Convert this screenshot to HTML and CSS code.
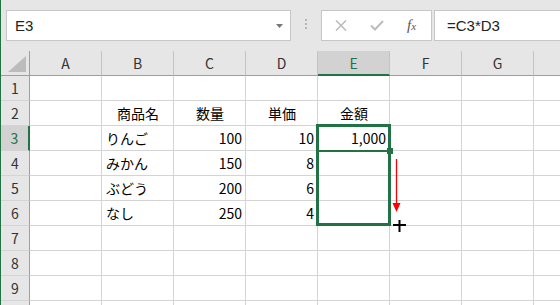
FILE: index.html
```html
<!DOCTYPE html>
<html lang="ja">
<head>
    <meta charset="UTF-8">
    <title>Excel</title>
    <link rel="stylesheet" href="styles.css">
</head>
<body>
    <div class="app">
        <div class="toolbar">
            <div class="name-box">
                <span>E3</span>
                <svg class="drop" width="7" height="4" viewBox="0 0 7 4"><path d="M0 0H7L3.5 4Z" fill="#777"/></svg>
            </div>
            <div class="grip"><i></i><i></i><i></i></div>
            <div class="fx-buttons">
                <svg width="12" height="11" viewBox="0 0 12 11"><path d="M1 0.5L11 10.5M11 0.5L1 10.5" stroke="#bdbdbd" stroke-width="1.6" fill="none"/></svg>
                <svg width="14" height="11" viewBox="0 0 14 11"><path d="M1 5.5L5 9.5L13 1" stroke="#bdbdbd" stroke-width="2" fill="none"/></svg>
                <span class="fx">f<small>x</small></span>
            </div>
            <div class="formula">=C3*D3</div>
        </div>

        <div class="sheet">
            <div class="row head">
                <div class="hd corner">
                    <svg width="18" height="16" viewBox="0 0 18 16"><path d="M18 0V16H0Z" fill="#bcbcbc"/></svg>
                </div>
                <div class="col">A</div>
                <div class="col">B</div>
                <div class="col">C</div>
                <div class="col">D</div>
                <div class="col on">E</div>
                <div class="col">F</div>
                <div class="col">G</div>
                <div class="col last"></div>
            </div>
            <div class="row">
                <div class="hd">1</div>
                <div class="c"></div><div class="c"></div><div class="c"></div><div class="c"></div><div class="c"></div><div class="c"></div><div class="c"></div><div class="c last"></div>
            </div>
            <div class="row">
                <div class="hd">2</div>
                <div class="c"></div>
                <div class="c ctr">商品名</div>
                <div class="c ctr">数量</div>
                <div class="c ctr">単価</div>
                <div class="c ctr">金額</div>
                <div class="c"></div><div class="c"></div><div class="c last"></div>
            </div>
            <div class="row">
                <div class="hd on">3</div>
                <div class="c"></div>
                <div class="c">りんご</div>
                <div class="c num">100</div>
                <div class="c num">10</div>
                <div class="c num">1,000</div>
                <div class="c"></div><div class="c"></div><div class="c last"></div>
            </div>
            <div class="row">
                <div class="hd">4</div>
                <div class="c"></div>
                <div class="c">みかん</div>
                <div class="c num">150</div>
                <div class="c num">8</div>
                <div class="c"></div><div class="c"></div><div class="c"></div><div class="c last"></div>
            </div>
            <div class="row">
                <div class="hd">5</div>
                <div class="c"></div>
                <div class="c">ぶどう</div>
                <div class="c num">200</div>
                <div class="c num">6</div>
                <div class="c"></div><div class="c"></div><div class="c"></div><div class="c last"></div>
            </div>
            <div class="row">
                <div class="hd">6</div>
                <div class="c"></div>
                <div class="c">なし</div>
                <div class="c num">250</div>
                <div class="c num">4</div>
                <div class="c"></div><div class="c"></div><div class="c"></div><div class="c last"></div>
            </div>
            <div class="row">
                <div class="hd">7</div>
                <div class="c"></div><div class="c"></div><div class="c"></div><div class="c"></div><div class="c"></div><div class="c"></div><div class="c"></div><div class="c last"></div>
            </div>
            <div class="row">
                <div class="hd">8</div>
                <div class="c"></div><div class="c"></div><div class="c"></div><div class="c"></div><div class="c"></div><div class="c"></div><div class="c"></div><div class="c last"></div>
            </div>
            <div class="row">
                <div class="hd">9</div>
                <div class="c"></div><div class="c"></div><div class="c"></div><div class="c"></div><div class="c"></div><div class="c"></div><div class="c"></div><div class="c last"></div>
            </div>
            <div class="row">
                <div class="hd"></div>
                <div class="c"></div><div class="c"></div><div class="c"></div><div class="c"></div><div class="c"></div><div class="c"></div><div class="c"></div><div class="c last"></div>
            </div>

            <!-- selection E3:E6 and fill drag -->
            <div class="selection"><div class="active-line"></div></div>
            <div class="fill-handle"></div>
            <svg class="drag-arrow" width="9" height="54" viewBox="0 0 9 54">
                <path d="M4.5 0V46" stroke="#f00" stroke-width="1.3"/>
                <path d="M0.5 44H8.5L4.5 53Z" fill="#f00"/>
            </svg>
            <svg class="cross" width="13" height="12" viewBox="0 0 13 12">
                <path d="M0 5H13M6.5 0V12" stroke="#000" stroke-width="2"/>
            </svg>
        </div>
    </div>
</body>
</html>
```

FILE: styles.css
```css
body {
    margin: 0;
    font-family: "Noto Sans CJK JP", "Liberation Sans", sans-serif;
    color: #000;
    overflow: hidden;
}

.app {
    border-left: 1px solid #217346;
    height: 305px;
    overflow: hidden;
}

.toolbar {
    display: flex;
    align-items: flex-start;
    height: 51px;
    padding-top: 10px;
    box-sizing: border-box;
    background-color: #e6e6e6;
}

.toolbar > * {
    flex: none;
}

.name-box {
    display: flex;
    align-items: center;
    justify-content: space-between;
    width: 285px;
    height: 31px;
    margin-left: 5px;
    padding: 0 7px 0 8px;
    box-sizing: border-box;
    background-color: #fff;
    border: 1px solid #c6c6c6;
    font-family: "Liberation Sans", sans-serif;
    font-size: 15px;
    color: #222;
}

.grip {
    display: flex;
    flex-direction: column;
    gap: 2px;
    width: 2px;
    margin: 9px 14px 0 14px;
}

.grip i {
    width: 2px;
    height: 2px;
    background-color: #b4b4b4;
}

.fx-buttons {
    display: flex;
    align-items: center;
    gap: 23px;
    width: 111px;
    height: 31px;
    padding-left: 13px;
    box-sizing: border-box;
    background-color: #fff;
    border: 1px solid #c6c6c6;
}

.fx {
    font-family: "Liberation Serif", serif;
    font-style: italic;
    font-size: 15px;
    color: #555;
}

.fx small {
    font-size: 11px;
}

.formula {
    width: 300px;
    height: 31px;
    margin-left: 2px;
    padding-left: 12px;
    box-sizing: border-box;
    background-color: #fff;
    border: 1px solid #c6c6c6;
    font-family: "Liberation Sans", sans-serif;
    font-size: 15px;
    line-height: 29px;
    color: #222;
}

.sheet {
    position: relative;
}

.row {
    display: flex;
    height: 25px;
}

.row > div {
    flex: none;
    box-sizing: border-box;
    height: 25px;
    border-right: 1px solid #d4d4d4;
    border-bottom: 1px solid #d4d4d4;
}

.hd {
    width: 29px;
    display: flex;
    align-items: center;
    justify-content: center;
    background-color: #e6e6e6;
    font-size: 14px;
    color: #333;
    border-right-color: #9e9e9e !important;
}

.hd.on {
    background-color: #d2d2d2;
    color: #217346;
    border-right: 2px solid #217346 !important;
}

.corner {
    align-items: flex-end;
    justify-content: flex-end;
    padding: 0 3px 3px 0;
}

.head > div {
    border-bottom-color: #9e9e9e !important;
}

.col {
    width: 72px;
    display: flex;
    align-items: center;
    justify-content: center;
    background-color: #e6e6e6;
    font-size: 14px;
    color: #333;
    border-right-color: #c4c4c4 !important;
}

.col.on {
    background-color: #d2d2d2;
    color: #217346;
    border-bottom: 2px solid #217346 !important;
}

.c {
    width: 72px;
    padding: 0 3px 0 4px;
    font-size: 14px;
    line-height: 24px;
    white-space: nowrap;
}

.last {
    width: 60px !important;
}

.ctr {
    text-align: center;
}

.num {
    text-align: right;
}

.selection {
    position: absolute;
    left: 315px;
    top: 73px;
    width: 75px;
    height: 102px;
    box-sizing: border-box;
    border: 3px solid #217346;
}

.active-line {
    position: absolute;
    left: 0;
    right: 0;
    top: 23px;
    height: 2px;
    background-color: #217346;
}

.fill-handle {
    position: absolute;
    left: 386px;
    top: 97px;
    width: 6px;
    height: 6px;
    background-color: #217346;
}

.drag-arrow {
    position: absolute;
    left: 391px;
    top: 108px;
}

.cross {
    position: absolute;
    left: 392px;
    top: 169px;
}
```
